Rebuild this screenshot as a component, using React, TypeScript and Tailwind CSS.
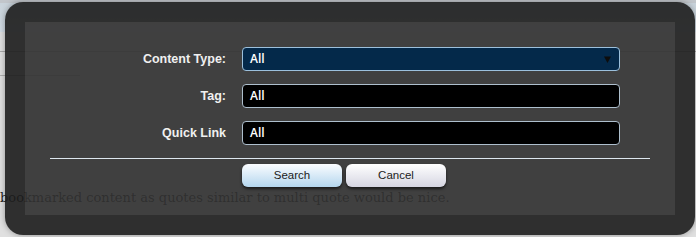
import React from "react";

function Field({ label, value, select }: { label: string; value: string; select?: boolean }) {
  return (
    <>
      <div className="flex items-center justify-end h-[24px] text-[12.5px] font-bold text-[#f0f0f0] [font-family:'Liberation_Sans',Arial,sans-serif]">
        {label}
      </div>
      <div
        className={
          "flex items-center justify-between h-[24px] rounded-[4px] border pl-[7px] pr-[8px] text-[12px] font-semibold text-white [font-family:'Open_Sans',sans-serif] " +
          (select ? "bg-[#04294a] border-[#9cc0dc]" : "bg-black border-[#aebfcd]")
        }
      >
        <span>{value}</span>
        {select && (
          <svg width="7" height="7" viewBox="0 0 7 7">
            <path d="M0 0.5 H7 L3.5 7 Z" fill="#0d0d0d" />
          </svg>
        )}
      </div>
    </>
  );
}

export default function App() {
  return (
    <div className="relative w-[696px] h-[237px] overflow-hidden bg-[#e0e0e0]">
      {/* underlying page */}
      <div className="h-[3px] bg-[#c2c6cb]" />
      <div className="h-[29px] bg-gradient-to-b from-[#c9d3db] to-[#d3dde5]" />
      <div className="h-[20px] border-b border-[#a9a9a9]" />
      <div className="h-[24px] w-[80px] border-b border-[#b0b0b0]" />
      <div className="mt-[114px] whitespace-nowrap text-[13px] leading-[16px] text-[#1e1e1e] [font-family:'DejaVu_Serif',serif]">
        bookmarked content as quotes similar to multi quote would be nice.
      </div>

      {/* modal overlay */}
      <div className="absolute left-[5px] top-[2px] w-[690px] h-[233px] rounded-[18px] p-[20px] bg-[rgba(28,28,28,0.9)] shadow-[0_0_6px_rgba(0,0,0,0.35)]">
        <div className="h-full bg-[rgba(255,255,255,0.087)] pt-[25px]">
          <div className="grid grid-cols-[201px_378px] gap-x-[16px] gap-y-[13px]">
            <Field label="Content Type:" value="All" select />
            <Field label="Tag:" value="All" />
            <Field label="Quick Link" value="All" />
          </div>
          <div className="mx-[25px] mt-[13px] h-px bg-[#dce6ee]" />
          <div className="mt-[5px] pl-[217px] flex gap-[4px] text-[11.5px] text-[#1c1c1c] [font-family:'Liberation_Sans',Arial,sans-serif]">
            <button className="w-[100px] h-[23px] rounded-[6px] bg-gradient-to-b from-[#fbfdff] to-[#b4d6ee] shadow-[0_2px_3px_rgba(0,0,0,0.6)]">
              Search
            </button>
            <button className="w-[100px] h-[23px] rounded-[6px] bg-gradient-to-b from-[#ffffff] to-[#d6d6e2] shadow-[0_2px_3px_rgba(0,0,0,0.6)]">
              Cancel
            </button>
          </div>
        </div>
      </div>
    </div>
  );
}
